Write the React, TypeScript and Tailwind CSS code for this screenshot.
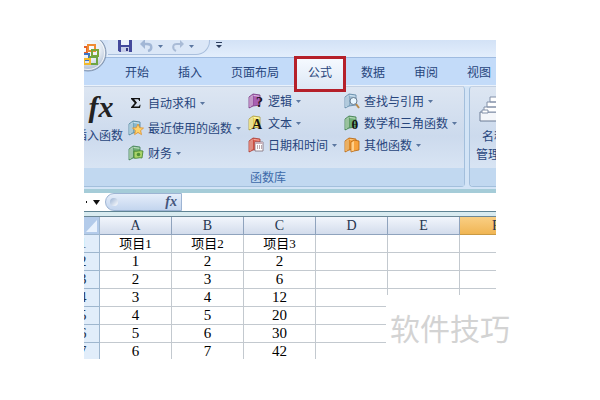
import React from "react";
import clsx from "clsx";

const tabs = ["开始", "插入", "页面布局", "公式", "数据", "审阅", "视图"];

const columns = ["A", "B", "C", "D", "E", "F"];

const rows = [
  ["项目1", "项目2", "项目3"],
  ["1", "2", "2"],
  ["2", "3", "6"],
  ["3", "4", "12"],
  ["4", "5", "20"],
  ["5", "6", "30"],
  ["6", "7", "42"],
];

function Caret() {
  return (
    <svg width="5" height="3" viewBox="0 0 5 3" aria-hidden="true">
      <path d="M0 0h5L2.5 3z" fill="#5b77a0" />
    </svg>
  );
}

interface BookProps {
  light: string;
  main: string;
  dark: string;
  children?: React.ReactNode;
}

function Book({ light, main, dark, children }: BookProps) {
  return (
    <svg width="16" height="16" viewBox="0 0 16 16" className="shrink-0 overflow-visible" aria-hidden="true">
      <path d="M1 4 5 1l7 1v10l-7 1-4 2z" fill={main} stroke={dark} strokeWidth=".8" />
      <path d="M1.5 4.2 5 1.8V12l-3.5 2.3z" fill={light} />
      <path d="M5 2v10.5M3 3.4V13" stroke={dark} strokeWidth=".6" />
      <path d="m5.5 2 6 .8v1l-6-.8z" fill={light} />
      {children}
    </svg>
  );
}

function Sigma() {
  return (
    <svg width="16" height="16" viewBox="0 0 16 16" className="shrink-0" aria-hidden="true">
      <path
        d="M3 3h9v3h-.8c-.2-1.2-.7-1.7-2-1.7H6.2L9 7.8 5.8 11.6h3.7c1.4 0 2-.6 2.3-1.9h.8L12 13H3v-.8l3.7-4.2L3 3.9z"
        fill="#111"
      />
    </svg>
  );
}

const icons = {
  sum: <Sigma />,
  recent: (
    <Book light="#d5eaf4" main="#87b6c9" dark="#4b8198">
      <path
        d="m10 4 1.7 3.7 3.8.4-2.9 2.5.9 4-3.5-2.1-3.4 2.1.8-4-2.9-2.5 3.8-.4z"
        fill="#ffd36b"
        stroke="#e0902c"
        strokeWidth=".8"
      />
    </Book>
  ),
  money: (
    <Book light="#c9e3cf" main="#6fae72" dark="#3f7d55">
      <path d="M6 6c3 1 5-1 9 0l-1 7c-3-1-5 1-8 0z" fill="#a9d36a" stroke="#3f7f2c" strokeWidth=".8" />
      <circle cx="10.5" cy="9.5" r="1.8" fill="#4f8f35" />
    </Book>
  ),
  logic: (
    <Book light="#e3bfe6" main="#a95fb2" dark="#74397f">
      <text x="8" y="14" fontSize="14" fontWeight="700" fontFamily="Liberation Serif, serif" fill="#1b1020">
        ?
      </text>
    </Book>
  ),
  text: (
    <Book light="#fff9b8" main="#f2e26a" dark="#a8983a">
      <text x="4" y="14" fontSize="14" fontWeight="700" fontFamily="Liberation Serif, serif" fill="#111">
        A
      </text>
    </Book>
  ),
  date: (
    <Book light="#f6b0a4" main="#dc5a4b" dark="#a83a31">
      <path d="M7 5h8v9H7z" fill="#fff" stroke="#7b6a77" strokeWidth=".8" />
      <path d="M7 5h8v2H7z" fill="#c9b3bd" />
      <path d="M9 9h1m1 0h1m1 0h1M9 11h1m1 0h1m1 0h1" stroke="#7b5560" />
    </Book>
  ),
  lookup: (
    <Book light="#d8e9f5" main="#9dbdd4" dark="#5b84a3">
      <path d="m12 11 3 4" stroke="#b98a4a" strokeWidth="2" />
      <circle cx="9.5" cy="8" r="3.5" fill="#e8f6ff" stroke="#6a7d91" />
    </Book>
  ),
  math: (
    <Book light="#c2e2c4" main="#6fae78" dark="#3e7a4a">
      <text x="7.5" y="14" fontSize="13" fontWeight="700" fontFamily="Liberation Serif, serif" fill="#111">
        θ
      </text>
    </Book>
  ),
  more: (
    <Book light="#ffd08a" main="#f39a33" dark="#b4640f">
      <path d="m7 5 3-2 5 1v9l-5 1-3 1z" fill="#f7a23c" stroke="#b4640f" strokeWidth=".8" />
      <path d="M7.5 5.5 10 4v9.5l-2.5 1z" fill="#ffd08a" />
    </Book>
  ),
};

interface Command {
  icon: keyof typeof icons;
  label: string;
}

interface CommandListProps {
  items: Command[];
  className?: string;
}

function CommandList({ items, className }: CommandListProps) {
  return (
    <div className={clsx("flex shrink-0 flex-col items-start", className)}>
      {items.map((item) => (
        <button key={item.label} type="button" className="flex h-4 items-center gap-1 whitespace-nowrap leading-4">
          {icons[item.icon]}
          <span>{item.label}</span>
          <Caret />
        </button>
      ))}
    </div>
  );
}

function OfficeButton() {
  return (
    <button type="button" aria-label="Office" className="absolute top-0 left-0">
      <svg width="24" height="33" viewBox="0 0 24 33" aria-hidden="true">
        <defs>
          <radialGradient id="orb" cx="4" cy="8" r="21" gradientUnits="userSpaceOnUse">
            <stop offset="0" stopColor="#fff" />
            <stop offset=".6" stopColor="#e6ecf4" />
            <stop offset="1" stopColor="#b5c3d6" />
          </radialGradient>
        </defs>
        <circle cx="4" cy="13" r="18" fill="url(#orb)" stroke="#7f93af" />
        <circle cx="4" cy="13" r="16.5" fill="none" stroke="#fff" strokeOpacity=".8" />
        <g fill="none" strokeWidth="2">
          <path d="M-3 7h6v6h-6z" stroke="#e4622a" />
          <path d="M4 5h7v6H4z" stroke="#f08a33" />
          <path d="M8 10h6v6H8z" stroke="#7aa63a" />
          <path d="M-1 14h6v6h-6z" stroke="#3b74c4" />
          <path d="M6 17h7v7H6z" stroke="#6fa544" />
          <path d="M0 19h6v5H0z" stroke="#f0b92d" />
        </g>
      </svg>
    </button>
  );
}

function TitleBar() {
  return (
    <div className="h-[17px] bg-linear-to-b from-[#d3e2f6] to-[#e3eefc] pl-6">
      <div className="flex items-start">
        <div className="flex h-[15px] w-[102px] items-start rounded-br-[14px] border-r border-b border-[#a9bfdd] bg-[#dbe7f7] pl-2.5">
          <button type="button" aria-label="保存">
            <svg width="14" height="12" viewBox="0 0 14 12" className="block" aria-hidden="true">
              <path d="M0 0h14v12H1.5L0 10.5z" fill="#44499c" />
              <path d="M3 0h8v5H3z" fill="#eef2fb" />
              <path d="M3 7h8v5H3z" fill="#c7cde8" />
              <path d="M8 8h2v3H8z" fill="#33387f" />
            </svg>
          </button>
          <button type="button" aria-label="撤消" className="ml-2 flex items-center gap-1">
            <svg width="14" height="12" viewBox="0 0 14 12" aria-hidden="true">
              <path d="M2 4h5c6 0 5 6 1 7" fill="none" stroke="#a2b7d6" strokeWidth="2.5" />
              <path d="M0 4 5-1v10z" fill="#a2b7d6" />
            </svg>
            <Caret />
          </button>
          <button type="button" aria-label="恢复" className="ml-2 flex items-center gap-1">
            <svg width="14" height="12" viewBox="0 0 14 12" aria-hidden="true">
              <path d="M11 4H7C1 3 1 9 5 11" fill="none" stroke="#a9bbd6" strokeWidth="2" />
              <path d="M13 4 9 0v8z" fill="#a9bbd6" />
            </svg>
            <Caret />
          </button>
        </div>
        <button type="button" aria-label="自定义快速访问工具栏" className="mt-0.5 ml-1.5">
          <svg width="6" height="6" viewBox="0 0 6 6" className="block" aria-hidden="true">
            <path d="M0 0h6v1H0zM0 3h6L3 6z" fill="#2d3f5f" />
          </svg>
        </button>
      </div>
    </div>
  );
}

function Ribbon() {
  return (
    <div className="flex h-[104px] gap-1 border-t border-[#e9f1fb] bg-[#d3e4f6] pb-0.5">
      <section className="flex min-w-0 flex-1 flex-col rounded-r-sm border-r border-b border-[#a3bfdc] bg-linear-to-b from-[#dde6f2] via-[#ccdaed] to-[#dfeaf7]">
        <div className="flex h-[82px] border-t border-[#c3d0e2]">
          <button type="button" className="-ml-[9px] flex h-14 w-12 shrink-0 flex-col items-center justify-between whitespace-nowrap pt-1.5">
            <span className="pl-1 font-['Liberation_Serif',serif] text-[30px] leading-7 font-bold text-[#222] italic">fx</span>
            <span className="leading-4">插入函数</span>
          </button>
          <CommandList
            className="ml-[5px] w-[120px] gap-[9px] pt-2"
            items={[
              { icon: "sum", label: "自动求和" },
              { icon: "recent", label: "最近使用的函数" },
              { icon: "money", label: "财务" },
            ]}
          />
          <CommandList
            className="w-24 gap-1.5 pt-1.5"
            items={[
              { icon: "logic", label: "逻辑" },
              { icon: "text", label: "文本" },
              { icon: "date", label: "日期和时间" },
            ]}
          />
          <CommandList
            className="gap-1.5 pt-1.5"
            items={[
              { icon: "lookup", label: "查找与引用" },
              { icon: "math", label: "数学和三角函数" },
              { icon: "more", label: "其他函数" },
            ]}
          />
        </div>
        <h2 className="flex-1 bg-[#c1d8f0] pr-3 text-center leading-[18px] text-[#3d6aaa]">
          函数库
        </h2>
      </section>
      <section className="flex w-[27px] flex-col overflow-hidden rounded-l-sm border-b border-l border-[#a3bfdc] bg-linear-to-b from-[#dde6f2] via-[#ccdaed] to-[#dfeaf7]">
        <button type="button" className="flex h-[82px] w-12 shrink-0 flex-col items-center border-t border-[#c3d0e2] pt-2">
          <svg width="30" height="28" viewBox="0 0 30 28" className="shrink-0" aria-hidden="true">
            <path d="M1 17h28v9H1z" fill="#f4f6fa" stroke="#6d7c96" />
            <path d="M5 12h19v5H5zM8 7h14v5H8zM11 2h10v5H11z" fill="#fff" stroke="#8290a8" />
            <path d="M3 15h6v3H3z" fill="#fff" stroke="#8290a8" />
          </svg>
          <span className="mt-1 leading-[18px]">
            名称
            <br />
            管理器
          </span>
        </button>
        <div className="flex-1 bg-[#c1d8f0]" />
      </section>
    </div>
  );
}

function FormulaBar() {
  return (
    <div className="flex h-[23px] items-center border-t-4 border-b border-t-[#a5ccd8] border-b-[#5f8494] bg-white">
      <button type="button" aria-label="名称框" className="flex w-[21px] items-center gap-1.5 pl-0.5">
        <span className="h-0.5 w-px bg-[#111]" />
        <svg width="7" height="5" viewBox="0 0 7 5" aria-hidden="true">
          <path d="M0 0h7L3.5 5z" fill="#111" />
        </svg>
      </button>
      <div className="flex h-[18px] w-[77px] items-center justify-between rounded-l-full border border-[#9db4d3] bg-linear-to-b from-[#e6eefa] to-[#c3d5ee] pr-1 pl-1">
        <span className="size-2 rounded-full bg-linear-to-br from-[#9cb3d3] to-white" />
        <button type="button" aria-label="插入函数" className="font-['Liberation_Serif',serif] text-sm leading-4 font-bold text-[#44557c] italic">
          fx
        </button>
      </div>
      <input type="text" aria-label="编辑栏" className="h-full min-w-0 flex-1 px-1 outline-none" />
    </div>
  );
}

function Sheet() {
  return (
    <table className="-mb-0.5 w-full table-fixed border-separate border-spacing-0 border-t border-[#6b8796] bg-white text-center font-['Liberation_Serif','Noto_Sans_CJK_SC',serif] text-[15px] leading-[17px] text-black">
      <thead>
        <tr>
          <th className="h-[18px] w-4 border-r border-b border-[#9eb6ce] bg-[#b3cbea] p-0">
            <svg width="11" height="12" viewBox="0 0 11 12" className="mx-auto block" aria-hidden="true">
              <path d="M11 0v12H0z" fill="#e9f2fd" />
            </svg>
          </th>
          {columns.map((name) => (
            <th
              key={name}
              scope="col"
              className={clsx(
                "h-[18px] overflow-hidden border-b p-0 text-sm leading-[17px] font-normal text-[#26364f]",
                name === "F"
                  ? "border-[#c99a45] bg-linear-to-b from-[#f9cf83] to-[#f0b553] pl-8 text-left"
                  : "w-[72px] border-r border-[#8fa3bd] bg-linear-to-b from-[#f2f6fc] to-[#d3dcec]"
              )}
            >
              {name}
            </th>
          ))}
        </tr>
      </thead>
      <tbody>
        {rows.map((row, r) => (
          <tr key={r}>
            <th scope="row" className="h-[18px] overflow-hidden border-r border-b border-[#9eb6ce] bg-[#e1edfa] p-0 text-left font-normal text-[#26364f]">
              <span className="-ml-[5px] block">{r + 1}</span>
            </th>
            {columns.map((name, c) => (
              <td
                key={name}
                className={clsx(
                  "h-[18px] border-b border-[#c3c9cf] p-0",
                  name !== "F" && "border-r",
                  r === 0 && "text-[13px]"
                )}
              >
                {row[c]}
              </td>
            ))}
          </tr>
        ))}
      </tbody>
    </table>
  );
}

export default function App() {
  return (
    <main className="bg-white pt-10 pr-[104px] pl-[84px] font-['Noto_Sans_CJK_SC',sans-serif] text-xs text-[#27457c]">
      <div className="relative">
        <div className="overflow-hidden">
          <TitleBar />
          <nav className="flex h-7 items-center gap-[29px] border-t border-[#9fbbe0] bg-[#c3dbf9] pl-[41px]">
            {tabs.map((tab) =>
              tab === "公式" ? (
                <button key={tab} type="button" className="relative shrink-0 leading-7">
                  <span className="absolute -inset-x-3.5 -top-0.5 -bottom-1.5 z-10 border-3 border-[#b5202a] bg-linear-to-b from-[#f5f9ff] to-[#dde8f5]" />
                  <span className="relative z-20">{tab}</span>
                </button>
              ) : (
                <button key={tab} type="button" className="shrink-0 leading-7">
                  {tab}
                </button>
              )
            )}
          </nav>
          <Ribbon />
          <FormulaBar />
          <div className="h-1 bg-[#d9ebf0]" />
          <Sheet />
          <OfficeButton />
        </div>
        <div className="absolute -right-[18px] bottom-0 flex h-16 w-32 items-center justify-center bg-white text-[30px] text-[#d3d3d3]">
          软件技巧
        </div>
      </div>
    </main>
  );
}
